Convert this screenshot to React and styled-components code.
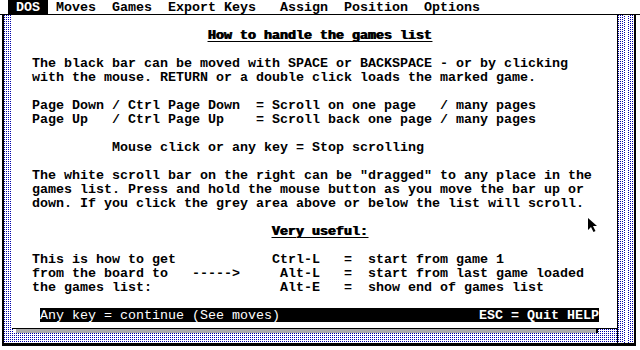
import React from 'react';
import styled, { createGlobalStyle, css } from 'styled-components';

const Global = createGlobalStyle`
  html, body { margin: 0; padding: 0; background: #fff; }
  body { width: 640px; height: 350px; overflow: hidden; }
`;

const dotted = (color) => css`
  background-color: ${color};
  background-image:
    linear-gradient(90deg, transparent 1px, #fff 1px),
    linear-gradient(transparent 1px, #fff 1px);
  background-size: 2px 2px;
`;

const row = css`
  line-height: 13px;
  padding-top: 1px;
`;

const Screen = styled.div`
  position: relative;
  width: 640px;
  height: 350px;
  background: #fff;
  color: #000;
  font-family: "Liberation Mono", "DejaVu Sans Mono", monospace;
  font-weight: 700;
  font-size: 13.3333px;
  letter-spacing: 0;
  line-height: 14px;
  display: flex;
  flex-direction: column;
`;

const MenuBar = styled.div`
  box-sizing: border-box;
  height: 15px;
  border-bottom: 1px solid #000;
  display: flex;
  padding-left: 8px;
  white-space: pre;
`;

const MenuItem = styled.span`
  ${row}
  height: 13px;
  margin-left: ${(p) => (p.$gap || 0) * 8}px;
  padding-left: ${(p) => (p.$active ? 8 : 0)}px;
  padding-right: ${(p) => (p.$active ? 8 : 0)}px;
  background: ${(p) => (p.$active ? '#000' : 'transparent')};
  color: ${(p) => (p.$active ? '#fff' : '#000')};
`;

const Workspace = styled.div`
  flex: 1;
  display: flex;
  padding: 0 4px 4px 2px;
`;

const Frame = styled.div`
  flex: 1;
  display: flex;
  border-left: 2px solid #000;
  border-right: 2px solid #000;
  border-bottom: 3px solid #000;
  ${dotted('#0000aa')}
`;

const LeftArea = styled.div`
  flex: 1;
  display: flex;
  flex-direction: column;
  padding-left: 8px;
`;

const Dialog = styled.div`
  height: 314px;
  box-sizing: border-box;
  background: #fff;
  border-bottom: 1px solid #000;
  padding: 13px 10px 0 20px;
  display: flex;
  flex-direction: column;
  gap: 14px;
`;

const Shadow = styled.div`
  height: 4px;
  margin: 0 19px 0 2px;
  background: #aaaaaa;
  border-left: 2px solid #fff;
  border-right: 2px solid #000;
`;

const ScrollColumn = styled.div`
  width: 16px;
  border-left: 1px solid #000;
  display: flex;
  justify-content: center;
`;

const ScrollStripe = styled.div`
  width: 7px;
  margin-left: 1px;
  background-color: #0000aa;
  background-image:
    linear-gradient(90deg, transparent 1px, #fff 1px),
    linear-gradient(transparent 1px, #fff 1px);
  background-size: 4px 2px;
  background-position: 1px 1px;
`;

const Heading = styled.div`
  ${row}
  text-align: center;
  white-space: pre;
  & > span {
    text-decoration: underline;
    text-decoration-thickness: 1px;
    text-underline-offset: 2px;
    text-shadow: 1px 0 0 #000;
  }
`;

const Para = styled.div`
  display: flex;
  flex-direction: column;
`;

const Line = styled.div`
  ${row}
  white-space: pre;
  padding-left: ${(p) => (p.$indent || 0) * 8}px;
`;

const KeyTable = styled.div`
  display: grid;
  grid-template-columns: 160px 48px 80px 48px auto;
  white-space: pre;
  & > span {
    ${row}
  }
`;

const Arrow = styled.span``;
const KeyName = styled.span`
  text-align: right;
`;
const Equals = styled.span`
  padding-left: 24px;
`;

const StatusBar = styled.div`
  ${row}
  margin: 0 8px 0 8px;
  background: #000;
  color: #fff;
  display: flex;
  justify-content: space-between;
  white-space: pre;
`;

const StatusLeft = styled.span`
  font-weight: 400;
`;

const StatusRight = styled.span`
  font-weight: 700;
`;

const Cursor = styled.svg`
  position: absolute;
  left: 588px;
  top: 218px;
`;

const keys = [
  ['This is how to get', '', 'Ctrl-L', 'start from game 1'],
  ['from the board to', '----->', 'Alt-L', 'start from last game loaded'],
  ['the games list:', '', 'Alt-E', 'show end of games list'],
];

export default function App() {
  return (
    <>
      <Global />
      <Screen>
        <MenuBar>
          <MenuItem $active>DOS</MenuItem>
          <MenuItem $gap={1}>Moves</MenuItem>
          <MenuItem $gap={2}>Games</MenuItem>
          <MenuItem $gap={2}>Export</MenuItem>
          <MenuItem $gap={1}>Keys</MenuItem>
          <MenuItem $gap={3}>Assign</MenuItem>
          <MenuItem $gap={2}>Position</MenuItem>
          <MenuItem $gap={2}>Options</MenuItem>
        </MenuBar>
        <Workspace>
          <Frame>
            <LeftArea>
              <Dialog>
                <Heading><span>How to handle the games list</span></Heading>
                <Para>
                  <Line>The black bar can be moved with SPACE or BACKSPACE - or by clicking</Line>
                  <Line>with the mouse. RETURN or a double click loads the marked game.</Line>
                </Para>
                <Para>
                  <Line>Page Down / Ctrl Page Down  = Scroll on one page   / many pages</Line>
                  <Line>Page Up   / Ctrl Page Up    = Scroll back one page / many pages</Line>
                </Para>
                <Para>
                  <Line $indent={10}>Mouse click or any key = Stop scrolling</Line>
                </Para>
                <Para>
                  <Line>The white scroll bar on the right can be "dragged" to any place in the</Line>
                  <Line>games list. Press and hold the mouse button as you move the bar up or</Line>
                  <Line>down. If you click the grey area above or below the list will scroll.</Line>
                </Para>
                <Heading><span>Very useful:</span></Heading>
                <KeyTable>
                  {keys.map(([a, b, c, d]) => (
                    <React.Fragment key={c}>
                      <span>{a}</span>
                      <Arrow>{b}</Arrow>
                      <KeyName>{c}</KeyName>
                      <Equals>=</Equals>
                      <span>{d}</span>
                    </React.Fragment>
                  ))}
                </KeyTable>
                <StatusBar>
                  <StatusLeft>Any key = continue (See moves)</StatusLeft>
                  <StatusRight>ESC = Quit HELP</StatusRight>
                </StatusBar>
              </Dialog>
              <Shadow />
            </LeftArea>
            <ScrollColumn>
              <ScrollStripe />
            </ScrollColumn>
          </Frame>
        </Workspace>
        <Cursor width="10" height="15" viewBox="0 0 10 15">
          <path d="M0 0 L0 12 L3 9 L5.5 14 L7.5 13 L5 8 L9 8 Z" fill="#000" />
        </Cursor>
      </Screen>
    </>
  );
}
